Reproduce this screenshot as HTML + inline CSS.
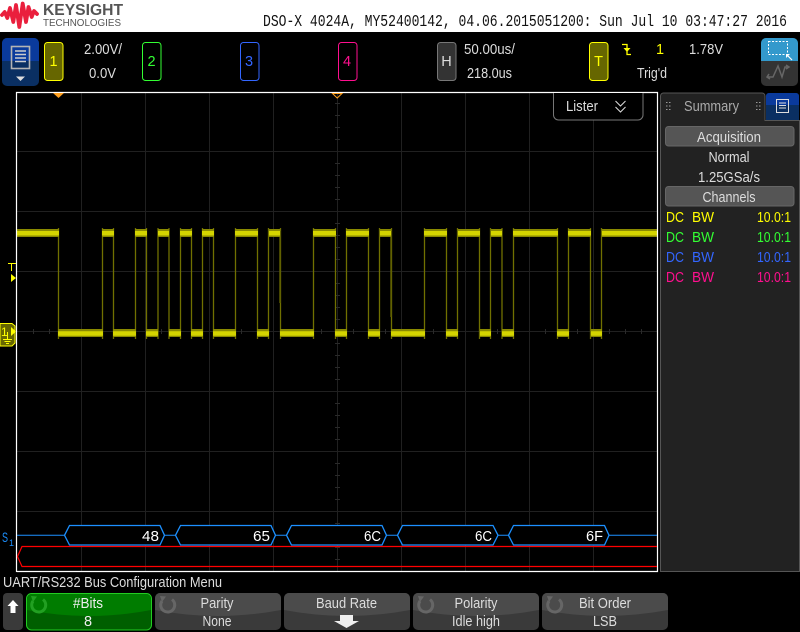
<!DOCTYPE html>
<html><head><meta charset="utf-8"><title>Keysight DSO-X 4024A</title>
<style>
html,body{margin:0;padding:0;background:#000;width:800px;height:632px;overflow:hidden}
svg{display:block}
text{font-family:"Liberation Sans",sans-serif;font-size:14.5px;fill:#ddd}
.m{text-anchor:middle}
</style></head><body>
<svg width="800" height="632" viewBox="0 0 800 632" xmlns="http://www.w3.org/2000/svg">
<rect width="800" height="632" fill="#000"/>
<!-- header -->
<rect width="800" height="32" fill="#fff"/>
<polyline points="2,15 4.7,12 7.3,18 10,8 13.3,22 16,5 19.3,27 22.7,3.500 26,22 28.500,7 31.700,17 34,11 37,14" fill="none" stroke="#ea1f3d" stroke-width="3.800" stroke-linejoin="round" stroke-linecap="round"/>
<text x="43" y="15" textLength="80" lengthAdjust="spacingAndGlyphs" style="font-size:15.500px;font-weight:bold;fill:#555">KEYSIGHT</text>
<text x="43" y="26" textLength="78" lengthAdjust="spacingAndGlyphs" style="font-size:10px;fill:#555">TECHNOLOGIES</text>
<text x="263" y="26" textLength="524" lengthAdjust="spacingAndGlyphs" style="font-family:'Liberation Mono',monospace;font-size:16.500px;fill:#111">DSO-X 4024A, MY52400142, 04.06.2015051200: Sun Jul 10 03:47:27 2016</text>

<!-- menu button -->
<rect x="2" y="38" width="37" height="48" rx="5" fill="#0a2f62"/>
<path d="M2 61V43a5 5 0 0 1 5-5H34a5 5 0 0 1 5 5V61Z" fill="#0a3a9c"/>
<rect x="11.500" y="46.500" width="18" height="22" fill="none" stroke="#b4b4b4" stroke-width="1.600"/>
<path d="M15 51H26M15 54.500H26M15 58H26M15 61.500H26" stroke="#ccc" stroke-width="1.400"/>
<path d="M16 76.500H25L20.500 81Z" fill="#ddd"/>

<!-- channels -->
<rect x="44.500" y="42.500" width="18.500" height="38" rx="3" fill="#666600" stroke="#ffff00"/>
<text x="53.500" y="66" class="m" style="fill:#ffff00">1</text>
<text x="84" y="54" textLength="38" lengthAdjust="spacingAndGlyphs">2.00V/</text>
<text x="89" y="78" textLength="27" lengthAdjust="spacingAndGlyphs">0.0V</text>
<rect x="142.500" y="42.500" width="18.500" height="38" rx="3" fill="#000" stroke="#33ff33"/>
<text x="151.500" y="66" class="m" style="fill:#33ff33">2</text>
<rect x="240.500" y="42.500" width="18.500" height="38" rx="3" fill="#000" stroke="#3366ff"/>
<text x="249" y="66" class="m" style="fill:#3366ff">3</text>
<rect x="338.500" y="42.500" width="18.500" height="38" rx="3" fill="#000" stroke="#ff0f8f"/>
<text x="347" y="66" class="m" style="fill:#ff0f8f">4</text>

<!-- horizontal -->
<rect x="437.500" y="42.500" width="18.500" height="38" rx="3" fill="#333" stroke="#777"/>
<text x="446.500" y="66" class="m" style="fill:#ddd">H</text>
<text x="464" y="54" textLength="51" lengthAdjust="spacingAndGlyphs">50.00us/</text>
<text x="467" y="78" textLength="45" lengthAdjust="spacingAndGlyphs">218.0us</text>

<!-- trigger -->
<rect x="589.500" y="42.500" width="18.500" height="38" rx="3" fill="#666600" stroke="#ffff00"/>
<text x="598.500" y="66" class="m" style="fill:#ffff00">T</text>
<path d="M622 44.500H627V54.500H631" fill="none" stroke="#ffff00" stroke-width="1.300"/>
<path d="M623.500 48H630.500L627 52Z" fill="#ffff00"/>
<text x="656" y="54" style="fill:#ffff00">1</text>
<text x="689" y="54" textLength="34" lengthAdjust="spacingAndGlyphs">1.78V</text>
<text x="637" y="78" textLength="30" lengthAdjust="spacingAndGlyphs">Trig'd</text>

<!-- touch mode -->
<rect x="761" y="38" width="37" height="48" rx="5" fill="#333"/>
<path d="M761 61V43a5 5 0 0 1 5-5H793a5 5 0 0 1 5 5V61Z" fill="#3399cc"/>
<rect x="768.500" y="41.500" width="19" height="13" fill="none" stroke="#fff" stroke-dasharray="2 1.500"/>
<path d="M787 55L792 60" stroke="#fff" stroke-width="1.200"/><path d="M786 54H790L786 58Z" fill="#fff"/>
<path d="M768 77H773L778 66L782 77L785 67H788M769 74L767 77L770 79M786 65L789 67L786 69" fill="none" stroke="#666" stroke-width="1.500"/>

<!-- grid -->
<path d="M81.500 93V571M145.500 93V571M209.500 93V571M273.500 93V571M337.500 93V571M401.500 93V571M465.500 93V571M529.500 93V571M593.500 93V571M17 151.500H657M17 211.500H657M17 271.500H657M17 331.500H657M17 391.500H657M17 451.500H657M17 511.500H657" stroke="#202020" stroke-width="1"/>
<path d="M335 103.500H340M335 115.500H340M335 127.500H340M335 139.500H340M335 163.500H340M335 175.500H340M335 187.500H340M335 199.500H340M335 223.500H340M335 235.500H340M335 247.500H340M335 259.500H340M335 283.500H340M335 295.500H340M335 307.500H340M335 319.500H340M335 343.500H340M335 355.500H340M335 367.500H340M335 379.500H340M335 403.500H340M335 415.500H340M335 427.500H340M335 439.500H340M335 463.500H340M335 475.500H340M335 487.500H340M335 499.500H340M335 523.500H340M335 535.500H340M335 547.500H340M335 559.500H340" stroke="#2a2a2a"/>
<path d="M33.500 329V334M49.500 329V334M65.500 329V334M97.500 329V334M113.500 329V334M129.500 329V334M161.500 329V334M177.500 329V334M193.500 329V334M225.500 329V334M241.500 329V334M257.500 329V334M289.500 329V334M305.500 329V334M321.500 329V334M353.500 329V334M369.500 329V334M385.500 329V334M417.500 329V334M433.500 329V334M449.500 329V334M481.500 329V334M497.500 329V334M513.500 329V334M545.500 329V334M561.500 329V334M577.500 329V334M609.500 329V334M625.500 329V334M641.500 329V334" stroke="#2a2a2a"/>

<!-- waveform edges -->
<path d="M58.500 228V339M102.500 228V339M113.500 228V339M135.500 228V339M146.500 228V339M158 228V339M169 228V339M180.500 228V339M191.500 228V339M202.500 228V339M213.500 228V339M235.500 228V339M257.500 228V339M268.500 228V339M280.500 228V339M313.500 228V339M335.500 228V339M346.500 228V339M368.500 228V339M379.500 228V339M391.500 228V339M424.500 228V339M446.500 228V339M457.500 228V339M479.500 228V339M490.500 228V339M502 228V339M513.500 228V339M557.500 228V339M568.500 228V339M590.500 228V339M601.500 228V339" stroke="#707000" stroke-width="1.300"/>
<path d="M280 231V303M391 231V317" stroke="#5c5c00" stroke-width="1.500"/>
<!-- waveform bands -->
<g fill="none">
<path d="M17 233H59M102 233H114M135 233H147M158 233H169M180 233H192M202 233H214M235 233H258M269 233H280M313 233H336M346 233H369M380 233H391M424 233H447M458 233H480M491 233H502M513 233H558M568 233H591M602 233H657M58 333H103M113 333H136M146 333H158M169 333H181M191 333H203M213 333H236M257 333H269M280 333H314M335 333H347M368 333H380M391 333H425M446 333H458M480 333H491M502 333H514M557 333H569M591 333H602" stroke="#8a8a00" stroke-width="8"/>
<path d="M17 233.300H59M102 233.300H114M135 233.300H147M158 233.300H169M180 233.300H192M202 233.300H214M235 233.300H258M269 233.300H280M313 233.300H336M346 233.300H369M380 233.300H391M424 233.300H447M458 233.300H480M491 233.300H502M513 233.300H558M568 233.300H591M602 233.300H657M58 333.500H103M113 333.500H136M146 333.500H158M169 333.500H181M191 333.500H203M213 333.500H236M257 333.500H269M280 333.500H314M335 333.500H347M368 333.500H380M391 333.500H425M446 333.500H458M480 333.500H491M502 333.500H514M557 333.500H569M591 333.500H602" stroke="#d4d400" stroke-width="4.500"/>
</g>

<!-- plot frame -->
<path d="M16.500 572V92.500H657.500V571.500H16.500" fill="none" stroke="#fff" stroke-width="1.200"/>
<path d="M53 93H64L58.500 98Z" fill="#ffa020"/>
<path d="M332.500 93.500H342L337.200 98Z" fill="none" stroke="#ffa020"/>

<!-- lister -->
<path d="M553.500 93V115a5 5 0 0 0 5 5H638a5 5 0 0 0 5-5V93" fill="#000" stroke="#777"/>
<text x="566" y="111" textLength="32" lengthAdjust="spacingAndGlyphs">Lister</text>
<path d="M615.500 101L620.500 106L625.500 101M615.500 107L620.500 112L625.500 107" fill="none" stroke="#ddd"/>

<!-- left markers -->
<path d="M8 263.500H16M11.500 263.500V271" stroke="#ffff00" fill="none"/>
<path d="M11 274L16 278L11 282Z" fill="#ffff00"/>
<path d="M0 323.500H12L15 326V343L12 346H0Z" fill="#666600" stroke="#ffff00"/>
<path d="M11 327L16 331.500L11 336Z" fill="#ffff00"/>
<text x="1" y="336" style="font-size:12px;fill:#ffff00">1</text>
<path d="M7.500 332V339M3 339.500H12M4.500 341.500H10.500M6 343.500H9" stroke="#ffff00" fill="none"/>

<!-- serial decode -->
<text x="2" y="542" textLength="6" lengthAdjust="spacingAndGlyphs" style="font-size:14px;fill:#1c90ff">S</text>
<text x="9" y="546" style="font-size:9px;fill:#1c90ff">1</text>
<path d="M17 535.300H64.500M164.500 535.300H175.500M275.500 535.300H286.500M386.500 535.300H397.500M498 535.300H508.500M609 535.300H657" stroke="#1c90ff" fill="none"/>
<path d="M69.500 525.500L64.500 535.300L69.500 545H160L164.500 535.300L160 525.500ZM180.500 525.500L175.500 535.300L180.500 545H271L275.500 535.300L271 525.500ZM291.500 525.500L286.500 535.300L291.500 545H382L386.500 535.300L382 525.500ZM402.500 525.500L397.500 535.300L402.500 545H493L498 535.300L493 525.500ZM513.500 525.500L508.500 535.300L513.500 545H604.500L609 535.300L604.500 525.500Z" fill="#000" stroke="#1c90ff" stroke-width="1.300"/>
<text x="142" y="541" textLength="17" lengthAdjust="spacingAndGlyphs" style="fill:#fff">48</text>
<text x="253" y="541" textLength="17" lengthAdjust="spacingAndGlyphs" style="fill:#fff">65</text>
<text x="364" y="541" textLength="17" lengthAdjust="spacingAndGlyphs" style="fill:#fff">6C</text>
<text x="475" y="541" textLength="17" lengthAdjust="spacingAndGlyphs" style="fill:#fff">6C</text>
<text x="586" y="541" textLength="17" lengthAdjust="spacingAndGlyphs" style="fill:#fff">6F</text>
<path d="M657 546.500H22L17.500 556.500L22 566.500H657" fill="none" stroke="#f00" stroke-width="1.200"/>

<!-- summary panel -->
<path d="M660.500 571.500V96a3 3 0 0 1 3-3H762a3 3 0 0 1 3 3V120.500H799.500V571.500Z" fill="#222" stroke="#555"/>
<path d="M766 120V96a3 3 0 0 1 3-3H796a3 3 0 0 1 3 3V120Z" fill="#0a2f62"/>
<path d="M766 105V96a3 3 0 0 1 3-3H796a3 3 0 0 1 3 3V105Z" fill="#0a3a9c"/>
<rect x="776.500" y="99.500" width="12" height="13" fill="none" stroke="#ddd"/>
<path d="M779 103H786M779 105.500H786M779 108H786" stroke="#ddd"/>
<text x="684" y="111" textLength="55" lengthAdjust="spacingAndGlyphs" style="fill:#aaa">Summary</text>
<path d="M666 102.500h1.500M669 102.500h1.500M666 106h1.500M669 106h1.500M666 109.500h1.500M669 109.500h1.500M756 102.500h1.500M759 102.500h1.500M756 106h1.500M759 106h1.500M756 109.500h1.500M759 109.500h1.500" stroke="#999"/>
<rect x="665.500" y="126.500" width="128.500" height="19.500" rx="3" fill="#555" stroke="#666"/>
<text x="729" y="142" class="m" textLength="64" lengthAdjust="spacingAndGlyphs">Acquisition</text>
<text x="729" y="162" class="m" textLength="41" lengthAdjust="spacingAndGlyphs">Normal</text>
<text x="729" y="182" class="m" textLength="62" lengthAdjust="spacingAndGlyphs">1.25GSa/s</text>
<rect x="665.500" y="186.500" width="128.500" height="19.500" rx="3" fill="#555" stroke="#666"/>
<text x="729" y="202" class="m" textLength="53" lengthAdjust="spacingAndGlyphs">Channels</text>
<g style="font-size:14px">
<text x="666" y="222" textLength="18" lengthAdjust="spacingAndGlyphs" style="fill:#ffff00">DC</text><text x="692" y="222" textLength="22" lengthAdjust="spacingAndGlyphs" style="fill:#ffff00">BW</text><text x="757" y="222" textLength="34" lengthAdjust="spacingAndGlyphs" style="fill:#ffff00">10.0:1</text>
<text x="666" y="242" textLength="18" lengthAdjust="spacingAndGlyphs" style="fill:#33ff33">DC</text><text x="692" y="242" textLength="22" lengthAdjust="spacingAndGlyphs" style="fill:#33ff33">BW</text><text x="757" y="242" textLength="34" lengthAdjust="spacingAndGlyphs" style="fill:#33ff33">10.0:1</text>
<text x="666" y="262" textLength="18" lengthAdjust="spacingAndGlyphs" style="fill:#3366ff">DC</text><text x="692" y="262" textLength="22" lengthAdjust="spacingAndGlyphs" style="fill:#3366ff">BW</text><text x="757" y="262" textLength="34" lengthAdjust="spacingAndGlyphs" style="fill:#3366ff">10.0:1</text>
<text x="666" y="282" textLength="18" lengthAdjust="spacingAndGlyphs" style="fill:#ff0f8f">DC</text><text x="692" y="282" textLength="22" lengthAdjust="spacingAndGlyphs" style="fill:#ff0f8f">BW</text><text x="757" y="282" textLength="34" lengthAdjust="spacingAndGlyphs" style="fill:#ff0f8f">10.0:1</text>
</g>

<!-- softkeys -->
<text x="3" y="587" textLength="219" lengthAdjust="spacingAndGlyphs">UART/RS232 Bus Configuration Menu</text>
<rect x="3" y="593" width="20" height="37" rx="4" fill="#3a3a3a"/>
<path d="M13 600L18.500 606H15.500V613H10.500V606H7.500Z" fill="#fff"/>

<rect x="26.500" y="593.500" width="125" height="36.500" rx="5" fill="#005f00" stroke="#22cc22"/>
<path d="M27 610V599a5 5 0 0 1 5-5H146a5 5 0 0 1 5 5V610Q89 622 27 610Z" fill="#007c00"/>
<path d="M43 599.500A7 7 0 1 1 33 601" fill="none" stroke="#22a022" stroke-width="3"/><path d="M31 596L37 596.500L33 602Z" fill="#22a022"/>
<text x="88" y="608" class="m" textLength="30" lengthAdjust="spacingAndGlyphs" style="fill:#eee">#Bits</text>
<text x="88" y="626" class="m" style="fill:#eee">8</text>

<rect x="155" y="593" width="126" height="37" rx="5" fill="#3a3a3a"/>
<path d="M155 610V598a5 5 0 0 1 5-5H276a5 5 0 0 1 5 5V610Q218 622 155 610Z" fill="#4b4b4b"/>
<path d="M172 599.500A7 7 0 1 1 162 601" fill="none" stroke="#666" stroke-width="3"/><path d="M160 596L166 596.500L162 602Z" fill="#666"/>
<text x="217" y="608" class="m" textLength="33" lengthAdjust="spacingAndGlyphs">Parity</text>
<text x="217" y="626" class="m" textLength="29" lengthAdjust="spacingAndGlyphs">None</text>

<rect x="284" y="593" width="126" height="37" rx="5" fill="#3a3a3a"/>
<path d="M284 610V598a5 5 0 0 1 5-5H405a5 5 0 0 1 5 5V610Q347 622 284 610Z" fill="#4b4b4b"/>
<text x="346.500" y="608" class="m" textLength="61" lengthAdjust="spacingAndGlyphs">Baud Rate</text>
<path d="M340 615H353V621H359L346.500 628L334 621H340Z" fill="#eee"/>

<rect x="413" y="593" width="126" height="37" rx="5" fill="#3a3a3a"/>
<path d="M413 610V598a5 5 0 0 1 5-5H534a5 5 0 0 1 5 5V610Q476 622 413 610Z" fill="#4b4b4b"/>
<path d="M430 599.500A7 7 0 1 1 420 601" fill="none" stroke="#666" stroke-width="3"/><path d="M418 596L424 596.500L420 602Z" fill="#666"/>
<text x="476" y="608" class="m" textLength="43" lengthAdjust="spacingAndGlyphs">Polarity</text>
<text x="476" y="626" class="m" textLength="48" lengthAdjust="spacingAndGlyphs">Idle high</text>

<rect x="542" y="593" width="126" height="37" rx="5" fill="#3a3a3a"/>
<path d="M542 610V598a5 5 0 0 1 5-5H663a5 5 0 0 1 5 5V610Q605 622 542 610Z" fill="#4b4b4b"/>
<path d="M559 599.500A7 7 0 1 1 549 601" fill="none" stroke="#666" stroke-width="3"/><path d="M547 596L553 596.500L549 602Z" fill="#666"/>
<text x="605" y="608" class="m" textLength="52" lengthAdjust="spacingAndGlyphs">Bit Order</text>
<text x="605" y="626" class="m" textLength="24" lengthAdjust="spacingAndGlyphs">LSB</text>
</svg>
</body></html>
